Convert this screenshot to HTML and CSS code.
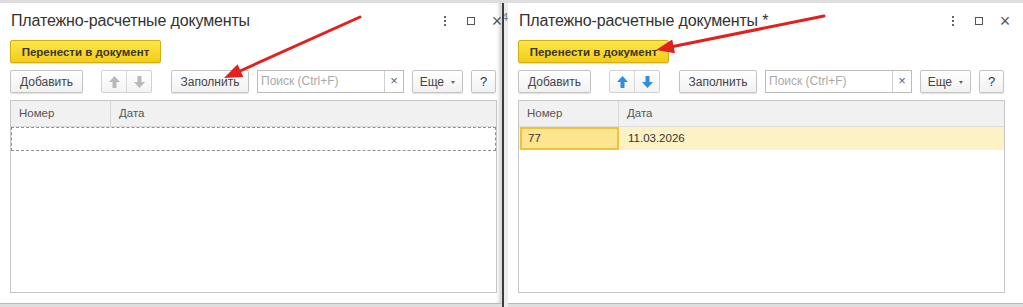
FILE: index.html
```html
<!DOCTYPE html>
<html lang="ru">
<head>
    <meta charset="UTF-8">
    <title>Платежно-расчетные документы</title>
    <link rel="stylesheet" href="styles.css">
</head>
<body>

<div class="desk">
    <!-- Форма до заполнения -->
    <div class="form form-left">
        <div class="form-head">
            <div class="form-title">Платежно-расчетные документы</div>
            <div class="form-icons">
                <span class="ico-more"><i></i><i></i><i></i></span>
                <span class="ico-max"></span>
                <span class="ico-close">&times;</span>
            </div>
        </div>
        <div class="cmd-row">
            <button class="btn-main">Перенести в документ</button>
        </div>
        <div class="toolbar">
            <button class="btn btn-add">Добавить</button>
            <div class="btn-pair disabled">
                <span class="half"><svg width="11" height="12" viewBox="0 0 11 12"><path d="M5.5 0 L11 6 H7.5 V12 H3.5 V6 H0 Z"/></svg></span>
                <span class="half"><svg width="11" height="12" viewBox="0 0 11 12"><path d="M5.5 12 L11 6 H7.5 V0 H3.5 V6 H0 Z"/></svg></span>
            </div>
            <button class="btn btn-fill">Заполнить</button>
            <div class="search">
                <span class="search-text">Поиск (Ctrl+F)</span>
                <span class="search-clear">&times;</span>
            </div>
            <button class="btn btn-more">Еще <span class="caret"></span></button>
            <button class="btn btn-help">?</button>
        </div>
        <div class="grid">
            <div class="grid-head">
                <div class="col-num">Номер</div>
                <div class="col-date">Дата</div>
            </div>
            <div class="grid-row row-empty"></div>
        </div>
    </div>

    <div class="gap-line"><span class="behind-a">4</span></div>

    <!-- Форма после заполнения -->
    <div class="form form-right">
        <div class="form-head">
            <div class="form-title">Платежно-расчетные документы *</div>
            <div class="form-icons">
                <span class="ico-more"><i></i><i></i><i></i></span>
                <span class="ico-max"></span>
                <span class="ico-close">&times;</span>
            </div>
        </div>
        <div class="cmd-row">
            <button class="btn-main">Перенести в документ</button>
        </div>
        <div class="toolbar">
            <button class="btn btn-add">Добавить</button>
            <div class="btn-pair">
                <span class="half"><svg width="11" height="12" viewBox="0 0 11 12"><path d="M5.5 0 L11 6 H7.5 V12 H3.5 V6 H0 Z"/></svg></span>
                <span class="half"><svg width="11" height="12" viewBox="0 0 11 12"><path d="M5.5 12 L11 6 H7.5 V0 H3.5 V6 H0 Z"/></svg></span>
            </div>
            <button class="btn btn-fill">Заполнить</button>
            <div class="search">
                <span class="search-text">Поиск (Ctrl+F)</span>
                <span class="search-clear">&times;</span>
            </div>
            <button class="btn btn-more">Еще <span class="caret"></span></button>
            <button class="btn btn-help">?</button>
        </div>
        <div class="grid">
            <div class="grid-head">
                <div class="col-num">Номер</div>
                <div class="col-date">Дата</div>
            </div>
            <div class="grid-row row-current">
                <div class="col-num cell-active">77</div>
                <div class="col-date">11.03.2026</div>
            </div>
        </div>
    </div>
</div>

<!-- Красные стрелки поверх скриншота -->
<svg class="marks" width="1023" height="307" viewBox="0 0 1023 307">
    <line x1="360" y1="17" x2="240" y2="71"/>
    <polygon points="224,78 243.3,77 237.6,64.2"/>
    <line x1="824" y1="16" x2="673" y2="46.5"/>
    <polygon points="656,50 675,53.3 672.2,39.5"/>
</svg>

</body>
</html>
```

FILE: styles.css
```css
body {
    margin: 0;
    width: 1023px;
    height: 307px;
    overflow: hidden;
    position: relative;
    background: #dedede;
    font-family: "Liberation Sans", Arial, sans-serif;
    color: #333;
}

.desk {
    display: flex;
    height: 307px;
    padding-top: 3px;
    box-sizing: border-box;
}

/* Окно формы */
.form {
    background: #fff;
    height: 301px;
    box-sizing: border-box;
    border-bottom: 1px solid #b8b8b8;
    overflow: hidden;
    flex-shrink: 0;
}

.form-left {
    width: 501px;
    padding-left: 10px;
    box-shadow: inset -4px 0 4px -3px rgba(0, 0, 0, 0.25);
}

.form-right {
    width: 516px;
    padding-left: 10px;
    border-left: 1px solid #c9c9c9;
}

.form-head,
.cmd-row,
.toolbar,
.grid {
    width: 487px;
}

.form-head {
    display: flex;
    align-items: center;
    justify-content: space-between;
    height: 34px;
    padding-top: 1px;
    box-sizing: border-box;
}

.form-title {
    font-size: 16px;
    letter-spacing: -0.15px;
    line-height: 20px;
    color: #333;
    padding-left: 1px;
}

.form-icons {
    display: flex;
    margin-right: -13px;
    color: #555;
}

.form-icons span {
    width: 26px;
    height: 16px;
    display: flex;
    align-items: center;
    justify-content: center;
}

.ico-more {
    flex-direction: column;
    gap: 2px;
}

.ico-more i {
    display: block;
    width: 2px;
    height: 2px;
    background: #666;
}

.ico-max::before {
    content: "";
    width: 8px;
    height: 8px;
    border: 1px solid #555;
    box-sizing: border-box;
}

.ico-close {
    font-size: 18px;
    font-weight: 300;
    line-height: 16px;
}

.cmd-row {
    height: 33px;
    padding-top: 3px;
    box-sizing: border-box;
}

.btn-main {
    width: 151px;
    height: 23px;
    padding: 0;
    font-family: inherit;
    font-size: 11.5px;
    font-weight: bold;
    color: #3b3522;
    background: linear-gradient(#fce74a, #f3cc1b);
    border: 1px solid #d2ae0f;
    border-radius: 2px;
    box-shadow: 0 1px 1px rgba(0, 0, 0, 0.15);
}

/* Панель команд */
.toolbar {
    display: flex;
    align-items: center;
    height: 23px;
}

.btn {
    height: 23px;
    padding: 0;
    font-family: inherit;
    font-size: 12px;
    color: #444;
    background: linear-gradient(#ffffff, #f1f1f1);
    border: 1px solid #c4c4c4;
    border-radius: 2px;
    box-shadow: 0 1px 1px rgba(0, 0, 0, 0.12);
    box-sizing: border-box;
}

.btn-add {
    width: 73px;
}

.btn-pair {
    display: flex;
    width: 51px;
    height: 23px;
    margin-left: 18px;
    border: 1px solid #d2d2d2;
    border-radius: 2px;
    box-sizing: border-box;
    background: linear-gradient(#ffffff, #f4f4f4);
}

.btn-pair .half {
    flex: 1;
    display: flex;
    align-items: center;
    justify-content: center;
}

.btn-pair .half + .half {
    border-left: 1px solid #d8d8d8;
}

.btn-pair svg path {
    fill: #2f8fdd;
}

.btn-pair.disabled svg path {
    fill: #b9b9b9;
}

.btn-fill {
    width: 78px;
    margin-left: 19px;
}

.search {
    display: flex;
    width: 147px;
    height: 23px;
    margin-left: 8px;
    border: 1px solid #bcbcbc;
    box-sizing: border-box;
    background: #fff;
}

.search-text {
    flex: 1;
    padding-left: 3px;
    font-size: 12px;
    line-height: 21px;
    color: #a9a9a9;
}

.search-clear {
    width: 18px;
    border-left: 1px solid #cfcfcf;
    text-align: center;
    font-size: 13px;
    line-height: 20px;
    color: #666;
}

.btn-more {
    width: 51px;
    margin-left: 8px;
}

.caret {
    display: inline-block;
    margin-left: 4px;
    vertical-align: middle;
    border-left: 2px solid transparent;
    border-right: 2px solid transparent;
    border-top: 3px solid #666;
}

.btn-help {
    width: 25px;
    margin-left: 8px;
    font-size: 13px;
    color: #333;
}

/* Табличная часть */
.grid {
    height: 193px;
    margin-top: 7px;
    border: 1px solid #c6c6c6;
    box-sizing: border-box;
}

.grid-head,
.grid-row {
    display: flex;
    font-size: 11.5px;
}

.grid-head {
    height: 25px;
    background: #f1f1f1;
    border-bottom: 1px solid #dcdcdc;
    color: #555;
}

.grid-head .col-num {
    border-right: 1px solid #d8d8d8;
}

.col-num {
    width: 100px;
    padding-left: 8px;
    box-sizing: border-box;
    line-height: 25px;
}

.col-date {
    flex: 1;
    padding-left: 8px;
    line-height: 25px;
}

.grid-row {
    height: 23px;
}

.row-empty {
    border: 1px dashed #8f8f8f;
    box-sizing: border-box;
    height: 24px;
}

.row-current {
    background: #fdf2c6;
    color: #333;
}

.row-current .col-num,
.row-current .col-date {
    line-height: 23px;
}

.cell-active {
    width: 99px;
    margin-left: 1px;
    background: #fde48e;
    border: 2px solid #f0c23a;
    box-sizing: border-box;
    padding-left: 6px;
    line-height: 19px !important;
}

.row-current .col-date {
    padding-left: 9px;
}

/* Полоса между окнами */
.gap-line {
    width: 6px;
    flex-shrink: 0;
    position: relative;
    background: #ececec;
    border-left: 2px solid #3c3c3c;
    box-sizing: border-box;
    margin-left: 1px;
    margin-right: -1px;
    overflow: hidden;
    font-size: 11px;
    color: #777;
}

.behind-a {
    position: absolute;
    top: 8px;
    left: -2px;
}

/* Стрелки */
.marks {
    position: absolute;
    top: 0;
    left: 0;
    pointer-events: none;
}

.marks line {
    stroke: #e2211c;
    stroke-width: 3;
    stroke-linecap: round;
}

.marks polygon {
    fill: #e2211c;
}
```
